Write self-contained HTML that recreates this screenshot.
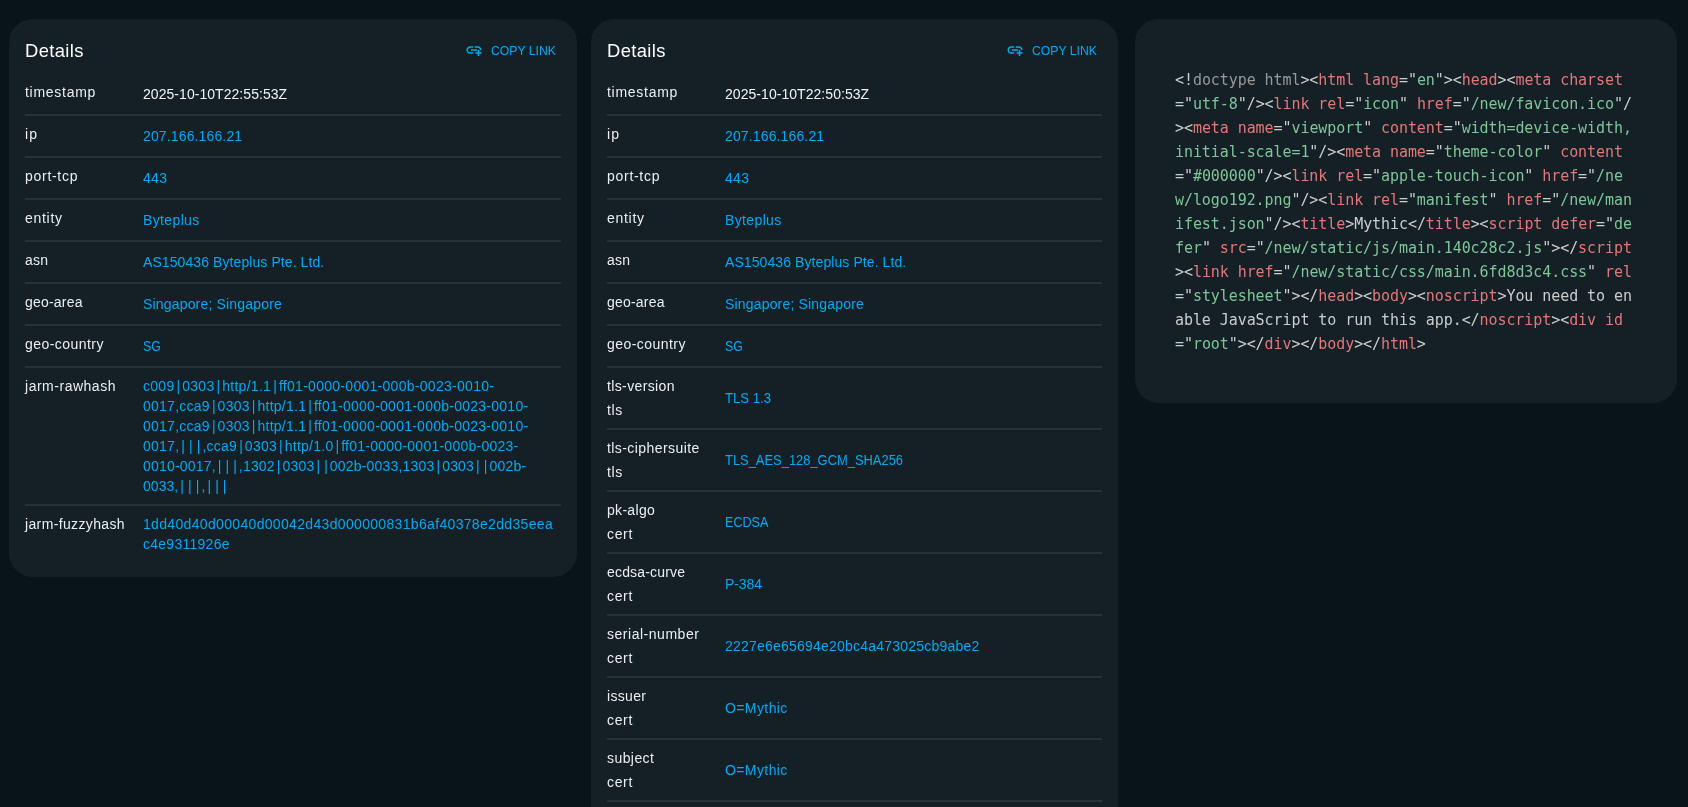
<!DOCTYPE html>
<html lang="en"><head><meta charset="utf-8"><title>Details</title>
<style>
*{box-sizing:border-box}
html,body{margin:0;padding:0}
body{width:1688px;height:807px;overflow:hidden;background:#08141a;font-family:"Liberation Sans", "DejaVu Sans", sans-serif;font-size:14px;color:#eceeef;position:relative}
.card{position:absolute;background:#142025;border-radius:24px;overflow:hidden;will-change:transform}
#c1{left:9px;top:19px;width:568px;height:558px}
#c2{left:591px;top:19px;width:527px;height:900px}
#c3{left:1135px;top:19px;width:542px;height:384px}
.hdr{height:55px;padding:0 16px;display:flex;align-items:center;justify-content:space-between}
.ttl{font-size:18.4px;line-height:24px;color:#fff;padding-top:7px;white-space:nowrap}
.btn{display:flex;align-items:center;color:#03a9f4;font-size:13px;line-height:22px;padding:4px 5px;margin-top:7px;white-space:nowrap}
.ic{display:block;margin-right:8px;margin-left:-1px}
.xb,.xt,.xn{display:inline-block;transform-origin:0 50%;white-space:pre}
.xt{position:relative;top:1px}.xn{position:relative;top:1px}.xb{position:relative;top:0px}
.pp{display:inline-block;width:0.551em;text-align:center;letter-spacing:0}
.tbl{margin:0 16px}
.row{display:flex;min-height:42px;border-bottom:2px solid #263238}
#c1 .row:last-child{border-bottom-color:transparent}
.k{width:118px;flex:none;padding-top:6px;padding-bottom:6px;line-height:24px;white-space:nowrap}
.v{flex:1;display:flex;flex-direction:column;justify-content:center;padding:8px 0;line-height:20px;white-space:nowrap;color:#f2f3f4;text-decoration:none}
.lk{color:#03a9f4}
pre{margin:0;padding:49px 40px 47px;font-family:"DejaVu Sans Mono","Liberation Mono",monospace;font-size:15px;letter-spacing:-0.074px;line-height:24px;color:#ccc;white-space:pre}
.ln{height:24px}
.p{color:#ccc}.d{color:#999}.t{color:#e2777a}
.s{color:#7ec699}
</style></head>
<body>
<section class="card" id="c1">
<div class="hdr"><div class="ttl"><span class="xt" style="letter-spacing:0.380px">Details</span></div><div class="btn"><svg class="ic" viewBox="0 0 24 24" width="18" height="18"><path fill="currentColor" d="M8 11h8v2H8zm12.1 1H22c0-2.76-2.24-5-5-5h-4v1.9h4c1.71 0 3.1 1.39 3.1 3.1M3.9 12c0-1.71 1.39-3.1 3.1-3.1h4V7H7c-2.76 0-5 2.24-5 5s2.24 5 5 5h4v-1.9H7c-1.71 0-3.1-1.39-3.1-3.1M19 12h-2v3h-3v2h3v3h2v-3h3v-2h-3z"/></svg><span class="xn" style="transform:scaleX(0.9394);margin-right:-4.46px">COPY LINK</span></div></div>
<div class="tbl">
<div class="row"><div class="k"><div><span class="xb" style="letter-spacing:0.719px">timestamp</span></div></div><div class="v"><div class="vl"><span class="xb" style="letter-spacing:0.049px">2025-10-10T22:55:53Z</span></div></div></div>
<div class="row"><div class="k"><div><span class="xb" style="letter-spacing:1.203px">ip</span></div></div><a class="v lk"><div class="vl"><span class="xb" style="letter-spacing:0.136px">207.166.166.21</span></div></a></div>
<div class="row"><div class="k"><div><span class="xb" style="letter-spacing:0.714px">port-tcp</span></div></div><a class="v lk"><div class="vl"><span class="xb" style="letter-spacing:0.328px">443</span></div></a></div>
<div class="row"><div class="k"><div><span class="xb" style="letter-spacing:0.703px">entity</span></div></div><a class="v lk"><div class="vl"><span class="xb" style="letter-spacing:0.368px">Byteplus</span></div></a></div>
<div class="row"><div class="k"><div><span class="xb" style="letter-spacing:0.234px">asn</span></div></div><a class="v lk"><div class="vl"><span class="xb" style="letter-spacing:0.085px">AS150436 Byteplus Pte. Ltd.</span></div></a></div>
<div class="row"><div class="k"><div><span class="xb" style="letter-spacing:0.212px">geo-area</span></div></div><a class="v lk"><div class="vl"><span class="xb" style="letter-spacing:0.178px">Singapore; Singapore</span></div></a></div>
<div class="row"><div class="k"><div><span class="xb" style="letter-spacing:0.448px">geo-country</span></div></div><a class="v lk"><div class="vl"><span class="xb" style="transform:scaleX(0.8826)">SG</span></div></a></div>
<div class="row"><div class="k"><div><span class="xb" style="letter-spacing:0.516px">jarm-rawhash</span></div></div><a class="v lk"><div class="vl"><span class="xb" style="letter-spacing:0.285px">c009<span class="pp">|</span>0303<span class="pp">|</span>http/1.1<span class="pp">|</span>ff01-0000-0001-000b-0023-0010-</span></div><div class="vl"><span class="xb" style="letter-spacing:0.254px">0017,cca9<span class="pp">|</span>0303<span class="pp">|</span>http/1.1<span class="pp">|</span>ff01-0000-0001-000b-0023-0010-</span></div><div class="vl"><span class="xb" style="letter-spacing:0.254px">0017,cca9<span class="pp">|</span>0303<span class="pp">|</span>http/1.1<span class="pp">|</span>ff01-0000-0001-000b-0023-0010-</span></div><div class="vl"><span class="xb" style="letter-spacing:0.254px">0017,<span class="pp">|</span><span class="pp">|</span><span class="pp">|</span>,cca9<span class="pp">|</span>0303<span class="pp">|</span>http/1.0<span class="pp">|</span>ff01-0000-0001-000b-0023-</span></div><div class="vl"><span class="xb" style="letter-spacing:0.188px">0010-0017,<span class="pp">|</span><span class="pp">|</span><span class="pp">|</span>,1302<span class="pp">|</span>0303<span class="pp">|</span><span class="pp">|</span>002b-0033,1303<span class="pp">|</span>0303<span class="pp">|</span><span class="pp">|</span>002b-</span></div><div class="vl"><span class="xb" style="letter-spacing:0.057px">0033,<span class="pp">|</span><span class="pp">|</span><span class="pp">|</span>,<span class="pp">|</span><span class="pp">|</span><span class="pp">|</span></span></div></a></div>
<div class="row"><div class="k"><div><span class="xb" style="letter-spacing:0.357px">jarm-fuzzyhash</span></div></div><a class="v lk"><div class="vl"><span class="xb" style="letter-spacing:0.330px">1dd40d40d00040d00042d43d000000831b6af40378e2dd35eea</span></div><div class="vl"><span class="xb" style="letter-spacing:0.264px">c4e9311926e</span></div></a></div>
</div>
</section>
<section class="card" id="c2">
<div class="hdr"><div class="ttl"><span class="xt" style="letter-spacing:0.380px">Details</span></div><div class="btn"><svg class="ic" viewBox="0 0 24 24" width="18" height="18"><path fill="currentColor" d="M8 11h8v2H8zm12.1 1H22c0-2.76-2.24-5-5-5h-4v1.9h4c1.71 0 3.1 1.39 3.1 3.1M3.9 12c0-1.71 1.39-3.1 3.1-3.1h4V7H7c-2.76 0-5 2.24-5 5s2.24 5 5 5h4v-1.9H7c-1.71 0-3.1-1.39-3.1-3.1M19 12h-2v3h-3v2h3v3h2v-3h3v-2h-3z"/></svg><span class="xn" style="transform:scaleX(0.9394);margin-right:-4.46px">COPY LINK</span></div></div>
<div class="tbl">
<div class="row"><div class="k"><div><span class="xb" style="letter-spacing:0.719px">timestamp</span></div></div><div class="v"><div class="vl"><span class="xb" style="letter-spacing:0.049px">2025-10-10T22:50:53Z</span></div></div></div>
<div class="row"><div class="k"><div><span class="xb" style="letter-spacing:1.203px">ip</span></div></div><a class="v lk"><div class="vl"><span class="xb" style="letter-spacing:0.136px">207.166.166.21</span></div></a></div>
<div class="row"><div class="k"><div><span class="xb" style="letter-spacing:0.714px">port-tcp</span></div></div><a class="v lk"><div class="vl"><span class="xb" style="letter-spacing:0.328px">443</span></div></a></div>
<div class="row"><div class="k"><div><span class="xb" style="letter-spacing:0.703px">entity</span></div></div><a class="v lk"><div class="vl"><span class="xb" style="letter-spacing:0.368px">Byteplus</span></div></a></div>
<div class="row"><div class="k"><div><span class="xb" style="letter-spacing:0.234px">asn</span></div></div><a class="v lk"><div class="vl"><span class="xb" style="letter-spacing:0.085px">AS150436 Byteplus Pte. Ltd.</span></div></a></div>
<div class="row"><div class="k"><div><span class="xb" style="letter-spacing:0.212px">geo-area</span></div></div><a class="v lk"><div class="vl"><span class="xb" style="letter-spacing:0.178px">Singapore; Singapore</span></div></a></div>
<div class="row"><div class="k"><div><span class="xb" style="letter-spacing:0.448px">geo-country</span></div></div><a class="v lk"><div class="vl"><span class="xb" style="transform:scaleX(0.8826)">SG</span></div></a></div>
<div class="row"><div class="k"><div><span class="xb" style="letter-spacing:0.370px">tls-version</span></div><div><span class="xb" style="letter-spacing:0.602px">tls</span></div></div><a class="v lk"><div class="vl"><span class="xb" style="transform:scaleX(0.9388)">TLS 1.3</span></div></a></div>
<div class="row"><div class="k"><div><span class="xb" style="letter-spacing:0.425px">tls-ciphersuite</span></div><div><span class="xb" style="letter-spacing:0.602px">tls</span></div></div><a class="v lk"><div class="vl"><span class="xb" style="transform:scaleX(0.9224)">TLS_AES_128_GCM_SHA256</span></div></a></div>
<div class="row"><div class="k"><div><span class="xb" style="letter-spacing:0.307px">pk-algo</span></div><div><span class="xb" style="letter-spacing:0.646px">cert</span></div></div><a class="v lk"><div class="vl"><span class="xb" style="transform:scaleX(0.8976)">ECDSA</span></div></a></div>
<div class="row"><div class="k"><div><span class="xb" style="letter-spacing:0.170px">ecdsa-curve</span></div><div><span class="xb" style="letter-spacing:0.646px">cert</span></div></div><a class="v lk"><div class="vl"><span class="xb" style="letter-spacing:-0.102px">P-384</span></div></a></div>
<div class="row"><div class="k"><div><span class="xb" style="letter-spacing:0.525px">serial-number</span></div><div><span class="xb" style="letter-spacing:0.646px">cert</span></div></div><a class="v lk"><div class="vl"><span class="xb" style="letter-spacing:0.214px">2227e6e65694e20bc4a473025cb9abe2</span></div></a></div>
<div class="row"><div class="k"><div><span class="xb" style="letter-spacing:0.338px">issuer</span></div><div><span class="xb" style="letter-spacing:0.646px">cert</span></div></div><a class="v lk"><div class="vl"><span class="xb" style="letter-spacing:0.402px">O=Mythic</span></div></a></div>
<div class="row"><div class="k"><div><span class="xb" style="letter-spacing:0.427px">subject</span></div><div><span class="xb" style="letter-spacing:0.646px">cert</span></div></div><a class="v lk"><div class="vl"><span class="xb" style="letter-spacing:0.402px">O=Mythic</span></div></a></div>
</div>
</section>
<section class="card" id="c3">
<pre><code><div class="ln"><span class="p">&lt;!</span><span class="d">doctype html</span><span class="p">&gt;&lt;</span><span class="t">html lang</span><span class="p">="</span><span class="s">en</span><span class="p">"&gt;&lt;</span><span class="t">head</span><span class="p">&gt;&lt;</span><span class="t">meta charset</span></div><div class="ln"><span class="p">="</span><span class="s">utf-8</span><span class="p">"/&gt;&lt;</span><span class="t">link rel</span><span class="p">="</span><span class="s">icon</span><span class="p">" </span><span class="t">href</span><span class="p">="</span><span class="s">/new/favicon.ico</span><span class="p">"/</span></div><div class="ln"><span class="p">&gt;&lt;</span><span class="t">meta name</span><span class="p">="</span><span class="s">viewport</span><span class="p">" </span><span class="t">content</span><span class="p">="</span><span class="s">width=device-width, </span></div><div class="ln"><span class="s">initial-scale=1</span><span class="p">"/&gt;&lt;</span><span class="t">meta name</span><span class="p">="</span><span class="s">theme-color</span><span class="p">" </span><span class="t">content</span></div><div class="ln"><span class="p">="</span><span class="s">#000000</span><span class="p">"/&gt;&lt;</span><span class="t">link rel</span><span class="p">="</span><span class="s">apple-touch-icon</span><span class="p">" </span><span class="t">href</span><span class="p">="</span><span class="s">/ne</span></div><div class="ln"><span class="s">w/logo192.png</span><span class="p">"/&gt;&lt;</span><span class="t">link rel</span><span class="p">="</span><span class="s">manifest</span><span class="p">" </span><span class="t">href</span><span class="p">="</span><span class="s">/new/man</span></div><div class="ln"><span class="s">ifest.json</span><span class="p">"/&gt;&lt;</span><span class="t">title</span><span class="p">&gt;</span>Mythic<span class="p">&lt;/</span><span class="t">title</span><span class="p">&gt;&lt;</span><span class="t">script defer</span><span class="p">="</span><span class="s">de</span></div><div class="ln"><span class="s">fer</span><span class="p">" </span><span class="t">src</span><span class="p">="</span><span class="s">/new/static/js/main.140c28c2.js</span><span class="p">"&gt;&lt;/</span><span class="t">script</span></div><div class="ln"><span class="p">&gt;&lt;</span><span class="t">link href</span><span class="p">="</span><span class="s">/new/static/css/main.6fd8d3c4.css</span><span class="p">" </span><span class="t">rel</span></div><div class="ln"><span class="p">="</span><span class="s">stylesheet</span><span class="p">"&gt;&lt;/</span><span class="t">head</span><span class="p">&gt;&lt;</span><span class="t">body</span><span class="p">&gt;&lt;</span><span class="t">noscript</span><span class="p">&gt;</span>You need to en</div><div class="ln">able JavaScript to run this app.<span class="p">&lt;/</span><span class="t">noscript</span><span class="p">&gt;&lt;</span><span class="t">div id</span></div><div class="ln"><span class="p">="</span><span class="s">root</span><span class="p">"&gt;&lt;/</span><span class="t">div</span><span class="p">&gt;&lt;/</span><span class="t">body</span><span class="p">&gt;&lt;/</span><span class="t">html</span><span class="p">&gt;</span></div></code></pre>
</section>
</body></html>
